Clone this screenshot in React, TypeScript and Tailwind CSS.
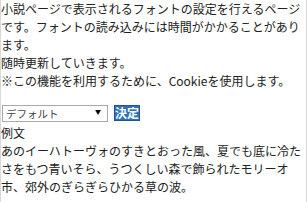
import { useState } from "react";

const FONTS = ["デフォルト", "ゴシック", "明朝"];

export default function App() {
  const [font, setFont] = useState(FONTS[0]);

  return (
    <div className="min-h-[202px] w-[307px] border-x border-[#d9d9d9] bg-white text-[12px] leading-[18px] text-[#222] [font-family:'Noto_Sans_CJK_JP',sans-serif]">
      <div>
        小説ページで表示されるフォントの設定を行えるページです。フォントの読み込みには時間がかかることがあります。
        <br />
        随時更新していきます。
        <br />
        ※この機能を利用するために、Cookieを使用します。
      </div>

      {/* Font picker */}
      <form
        className="mt-[14px] flex items-center gap-[6px] pl-[1px]"
        onSubmit={(e) => e.preventDefault()}
      >
        <div className="relative h-[17px] w-[106px]">
          <select
            value={font}
            onChange={(e) => setFont(e.target.value)}
            className="h-full w-full appearance-none rounded-none border border-[#a9a9a9] bg-white pl-[3px] text-[10.5px] leading-[15px] text-[#444] outline-none"
          >
            {FONTS.map((f) => (
              <option key={f}>{f}</option>
            ))}
          </select>
          <span className="pointer-events-none absolute right-[7px] top-[4px] text-[6px] leading-[8px] text-black">
            ▼
          </span>
        </div>
        <button
          type="submit"
          className="h-[16px] w-[26px] border border-[#1f5592] bg-[#2f70b6] text-[12px] font-bold leading-[14px] text-white"
        >
          決定
        </button>
      </form>

      <div className="mt-[3px]">例文</div>
      <div>
        あのイーハトーヴォのすきとおった風、夏でも底に冷たさをもつ青いそら、うつくしい森で飾られたモリーオ市、郊外のぎらぎらひかる草の波。
      </div>
    </div>
  );
}
